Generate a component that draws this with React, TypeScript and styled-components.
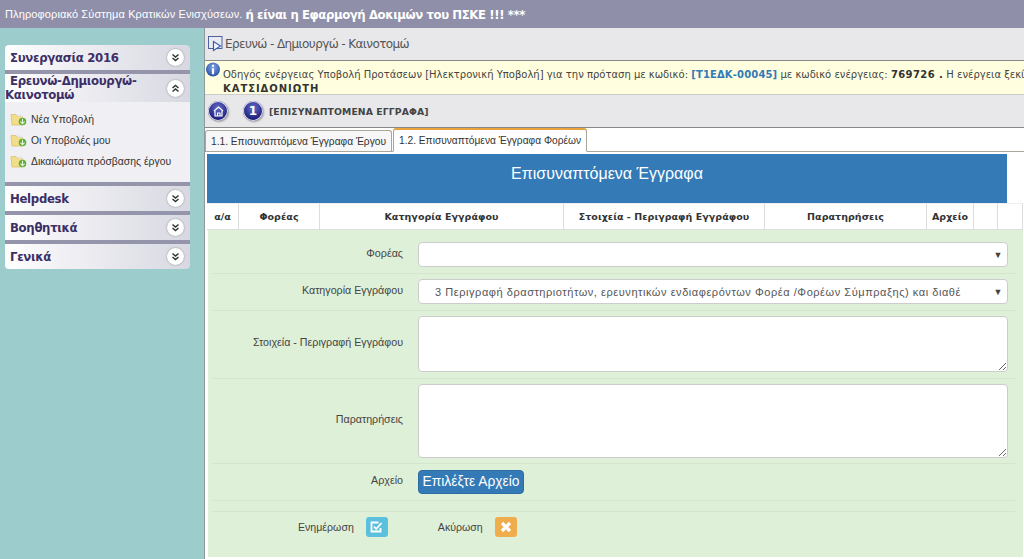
import React from "react";
import styled, { createGlobalStyle } from "styled-components";

const Global = createGlobalStyle`
  html, body { margin: 0; padding: 0; height: 559px; overflow: hidden; background: #9ccccc; }
  * { box-sizing: border-box; }
  #root { height: 559px; }
`;
const Page = styled.div`width:1024px;height:559px;display:flex;flex-direction:column;overflow:hidden;font-family:"DejaVu Sans",sans-serif;`;
const Header = styled.div`height:28px;background:#8f8fa9;color:#fff;display:flex;align-items:center;padding-left:5px;gap:3px;white-space:nowrap;`;
const HeaderSmall = styled.span`font:11px "Liberation Sans",sans-serif;letter-spacing:.12px;`;
const HeaderBold = styled.span`font:bold 13px "DejaVu Sans Condensed","DejaVu Sans",sans-serif;letter-spacing:-.4px;`;
const Columns = styled.div`flex:1;display:flex;min-height:0;`;
const Sidebar = styled.aside`width:204px;background:#9ccccc;padding:17px 14px 0 5px;display:flex;flex-direction:column;`;
const PanelHead = styled.div<{ $open?: boolean; $round?: "top" | "bottom" }>`
  display:flex;align-items:center;justify-content:space-between;
  height:${p => p.$open ? 28 : 25}px;padding:0 6px 0 5px;
  background:linear-gradient(90deg,#fff 0%,#f1f1f5 30%,#d8d8e2 100%);
  color:#3c2f66;font:bold 13px/14px "DejaVu Sans Condensed","DejaVu Sans",sans-serif;
  border-radius:${p => p.$round === "top" ? "4px 4px 0 0" : p.$round === "bottom" ? "0 0 4px 4px" : "0"};
`;
const HeadText = styled.span`display:block;letter-spacing:-.3px;`;
const Outdent = styled.span`display:inline-block;margin-left:-5px;`;
const Chevron = styled.span`width:17px;height:17px;border-radius:50%;background:#fff;box-shadow:0 0 2px #888;display:flex;align-items:center;justify-content:center;flex:none;`;
const Divider = styled.div`height:4px;background:#9494ab;`;
const PanelBody = styled.ul`height:80px;margin:0;padding:8px 0 0 5px;list-style:none;background:#f0f0f4;display:flex;flex-direction:column;gap:3px;`;
const MenuItem = styled.li`height:18px;display:flex;align-items:center;gap:4px;font:10.4px "Liberation Sans",sans-serif;color:#333;`;
const Main = styled.main`flex:1;min-width:0;border-left:1px solid #8d9a9a;background:#fff;display:flex;flex-direction:column;`;
const TitleBar = styled.div`height:33px;background:#e8e8ea;border-bottom:1px solid #888;display:flex;align-items:center;padding:0 0 0 2px;font:12px "DejaVu Sans",sans-serif;color:#555;white-space:nowrap;letter-spacing:-.6px;`;
const Notice = styled.div`height:34px;background:#ffffdf;border-bottom:1px solid #ccc;position:relative;padding:7px 0 0 18px;font:10px/14px "DejaVu Sans",sans-serif;color:#444;white-space:nowrap;overflow:hidden;`;
const InfoIcon = styled.span`position:absolute;left:0;top:1px;width:16px;height:16px;`;
const NoticeBold = styled.b`color:#333;letter-spacing:.4px;`;
const Owner = styled(NoticeBold)`letter-spacing:.95px;`;
const Code = styled.b`color:#337ab7;letter-spacing:.15px;`;
const Toolbar = styled.div`height:33px;background:#e8e8ea;border-bottom:1px solid #888;display:flex;align-items:center;padding-left:3px;`;
const RoundBtn = styled.span<{ $step?: boolean }>`width:20px;height:20px;border-radius:50%;background:radial-gradient(circle at 50% 35%,#6670cc,#1c1c78 70%);box-shadow:1px 1px 2px #999,inset 0 0 0 1px #dde;color:#fff;display:flex;align-items:center;justify-content:center;font:bold 12px "DejaVu Sans",sans-serif;margin-right:${p => p.$step ? 6 : 15}px;`;
const ToolText = styled.b`font:bold 9.3px "DejaVu Sans",sans-serif;color:#444;letter-spacing:.1px;`;
const Tabs = styled.div`height:24px;border-bottom:1px solid #aaa79a;display:flex;align-items:flex-end;`;
const Tab = styled.div<{ $active?: boolean }>`
  height:${p => p.$active ? 24 : 21}px;
  padding:0 5px;display:flex;align-items:center;
  border:1px solid #aaa79a;border-bottom:${p => p.$active ? "1px solid #fff" : "0"};
  border-top:${p => p.$active ? "2px solid #e8a33c" : "1px solid #aaa79a"};
  border-radius:3px 3px 0 0;margin-right:1px;
  font:10.2px "Liberation Sans",sans-serif;color:#333;white-space:nowrap;background:${p => p.$active ? "#fff" : "#f7f7f7"};
  margin-bottom:${p => p.$active ? "-1px" : "0"};
`;
const Content = styled.div`padding:2px 0 2px 2px;flex:1;display:flex;flex-direction:column;min-height:0;background:#fff;`;
const Banner = styled.div`height:49px;width:800px;background:#337ab7;color:#fff;display:flex;align-items:center;justify-content:center;font:16px "Liberation Sans",sans-serif;padding-bottom:10px;`;
const TableHead = styled.div`height:27px;display:grid;grid-template-columns:32px 81px 244px 201px 162px 47px 24px 25px;width:816px;background:#fff;border-bottom:1px solid #ddd;`;
const Th = styled.div`border-right:1px solid #ddd;border-top:1px solid #eee;display:flex;align-items:center;justify-content:center;font:bold 9.5px "DejaVu Sans",sans-serif;color:#333;white-space:nowrap;letter-spacing:.05px;`;
const Form = styled.div`flex:1;margin-left:1px;width:815px;background:#dff0d8;padding:6px 8px 0 0;display:flex;flex-direction:column;`;
const Row = styled.div<{ $h: number }>`
  height:${p => p.$h}px;box-shadow:0 1px 0 #d3e5cb;margin-left:5px;
  display:grid;grid-template-columns:190px 590px;column-gap:15px;align-items:center;
`;
const Label = styled.label`text-align:right;font:10.7px "Liberation Sans",sans-serif;color:#444;padding-bottom:4px;`;
const Select = styled.div`height:25px;background:#fff;border:1px solid #ccc;border-radius:4px;display:flex;align-items:center;justify-content:space-between;padding:0 4px 0 16px;font:11px "Liberation Sans",sans-serif;color:#555;letter-spacing:.55px;white-space:nowrap;overflow:hidden;`;
const Arrow = styled.span`font-size:9px;color:#444;flex:none;`;
const Area = styled.textarea<{ $h: number }>`display:block;width:590px;height:${p => p.$h}px;border:1px solid #ccc;border-radius:4px;background:#fff;resize:vertical;margin:0;`;
const FileBtn = styled.button`height:24px;width:106px;padding:0;background:#337ab7;color:#fff;border:1px solid #2e6da4;border-radius:4px;font:13.8px "Liberation Sans",sans-serif;display:block;`;
const Spacer = styled.div`height:11px;box-shadow:0 1px 0 #d3e5cb;margin-left:5px;`;
const Actions = styled.div`display:flex;align-items:center;height:32px;margin-left:90px;font:10.6px "Liberation Sans",sans-serif;color:#444;`;
const ActionLabel = styled.span<{ $gap: number }>`margin-right:${p => p.$gap}px;`;
const ActionBtn = styled.span<{ $c: string; $mr?: number }>`width:22px;height:20px;border-radius:3px;background:${p => p.$c};display:flex;align-items:center;justify-content:center;margin-right:${p => p.$mr || 0}px;`;

const Chev = ({ up }: { up?: boolean }) => (
  <Chevron>
    <svg width="9" height="9" viewBox="0 0 9 9" fill="none" stroke="#333" strokeWidth="1.5">
      {up ? <path d="M1.5 4 4.5 1.5 7.5 4M1.5 7.5 4.5 5 7.5 7.5" /> : <path d="M1.5 1.5 4.5 4 7.5 1.5M1.5 5 4.5 7.5 7.5 5" />}
    </svg>
  </Chevron>
);
const Folder = () => (
  <svg width="17" height="15" viewBox="0 0 17 15">
    <path d="M1 2.5h5l1.2 1.6h4.8l1 2.4v6.5H2z" fill="#f2dd8a" stroke="#d8bc5c" strokeWidth=".7" />
    <path d="M7 2.5h5l1 2H8z" fill="#dfe8f2" />
    <circle cx="12.5" cy="9.5" r="3.8" fill="#5fae38" />
    <path d="M12.5 6.8v4.6M10.4 9.6l2.1 2.2 2.1-2.2" stroke="#e9f7df" strokeWidth="1.1" fill="none" />
  </svg>
);
const ArrowDoc = () => (
  <svg width="18" height="18" viewBox="0 0 18 18">
    <rect x="1.5" y="1.5" width="13.5" height="12" fill="#e8eaf4" stroke="#50609e" />
    <path d="M6.5 6.5v9l7-4.5z" fill="#f3f6ff" stroke="#3d5cae" strokeWidth="1.2" />
  </svg>
);

export default function App() {
  return (
    <Page>
      <Global />
      <Header>
        <HeaderSmall>Πληροφοριακό Σύστημα Κρατικών Ενισχύσεων.</HeaderSmall>
        <HeaderBold>ή είναι η Εφαρμογή Δοκιμών του ΠΣΚΕ !!! ***</HeaderBold>
      </Header>
      <Columns>
        <Sidebar>
          <PanelHead $round="top"><HeadText>Συνεργασία 2016</HeadText><Chev /></PanelHead>
          <Divider />
          <PanelHead $open>
            <HeadText>Ερευνώ-Δημιουργώ-<br /><Outdent>Καινοτομώ</Outdent></HeadText><Chev up />
          </PanelHead>
          <PanelBody>
            <MenuItem><Folder />Νέα Υποβολή</MenuItem>
            <MenuItem><Folder />Οι Υποβολές μου</MenuItem>
            <MenuItem><Folder />Δικαιώματα πρόσβασης έργου</MenuItem>
          </PanelBody>
          <Divider />
          <PanelHead><HeadText>Helpdesk</HeadText><Chev /></PanelHead>
          <Divider />
          <PanelHead><HeadText>Βοηθητικά</HeadText><Chev /></PanelHead>
          <Divider />
          <PanelHead $round="bottom"><HeadText>Γενικά</HeadText><Chev /></PanelHead>
        </Sidebar>
        <Main>
          <TitleBar><ArrowDoc />Ερευνώ - Δημιουργώ - Καινοτομώ</TitleBar>
          <Notice>
            <InfoIcon>
              <svg width="16" height="16" viewBox="0 0 16 16">
                <defs>
                  <radialGradient id="info" cx="50%" cy="35%" r="65%">
                    <stop offset="0" stopColor="#7fa4e6" />
                    <stop offset="1" stopColor="#274fa8" />
                  </radialGradient>
                </defs>
                <circle cx="8" cy="7.5" r="7" fill="url(#info)" />
                <path d="M8 2.8v2M8 6.2v6" stroke="#fff" strokeWidth="2.2" />
              </svg>
            </InfoIcon>
            Οδηγός ενέργειας Υποβολή Προτάσεων [Ηλεκτρονική Υποβολή] για την πρόταση με κωδικό: <Code>[Τ1ΕΔΚ-00045]</Code> με κωδικό ενέργειας: <NoticeBold>769726 .</NoticeBold> Η ενέργεια ξεκίνησε
            <br /><Owner>ΚΑΤΣΙΔΟΝΙΩΤΗ</Owner>
          </Notice>
          <Toolbar>
            <RoundBtn>
              <svg width="11" height="11" viewBox="0 0 11 11" fill="none" stroke="#fff" strokeWidth="1.2">
                <path d="M1 5 5.5 1 10 5M2 5v5h7V5M4.5 10V7h2.5v3" />
              </svg>
            </RoundBtn>
            <RoundBtn $step>1</RoundBtn>
            <ToolText>[ΕΠΙΣΥΝΑΠΤΟΜΕΝΑ ΕΓΓΡΑΦΑ]</ToolText>
          </Toolbar>
          <Tabs>
            <Tab>1.1. Επισυναπτόμενα Έγγραφα Έργου</Tab>
            <Tab $active>1.2. Επισυναπτόμενα Έγγραφα Φορέων</Tab>
          </Tabs>
          <Content>
            <Banner>Επισυναπτόμενα Έγγραφα</Banner>
            <TableHead>
              <Th>α/α</Th><Th>Φορέας</Th><Th>Κατηγορία Εγγράφου</Th><Th>Στοιχεία - Περιγραφή Εγγράφου</Th><Th>Παρατηρήσεις</Th><Th>Αρχείο</Th><Th /><Th />
            </TableHead>
            <Form>
              <Row $h={37}><Label>Φορέας</Label><Select><span /><Arrow>▼</Arrow></Select></Row>
              <Row $h={37}>
                <Label>Κατηγορία Εγγράφου</Label>
                <Select><span>3 Περιγραφή δραστηριοτήτων, ερευνητικών ενδιαφερόντων Φορέα /Φορέων Σύμπραξης) και διαθέ</span><Arrow>▼</Arrow></Select>
              </Row>
              <Row $h={68}><Label>Στοιχεία - Περιγραφή Εγγράφου</Label><Area $h={56} /></Row>
              <Row $h={85}><Label>Παρατηρήσεις</Label><Area $h={74} /></Row>
              <Row $h={37}><Label>Αρχείο</Label><div><FileBtn>Επιλέξτε Αρχείο</FileBtn></div></Row>
              <Spacer />
              <Actions>
                <ActionLabel $gap={12}>Ενημέρωση</ActionLabel>
                <ActionBtn $c="#5bc0de" $mr={50}>
                  <svg width="13" height="12" viewBox="0 0 13 12" fill="none" stroke="#fff" strokeWidth="1.8">
                    <path d="M10.5 7v3.5h-9v-9h7M4 5.5 6.2 8 11.5 2" />
                  </svg>
                </ActionBtn>
                <ActionLabel $gap={12}>Ακύρωση</ActionLabel>
                <ActionBtn $c="#f0ad4e">
                  <svg width="12" height="12" viewBox="0 0 12 12" stroke="#fff" strokeWidth="3.2">
                    <path d="M2 2l8 8M10 2l-8 8" />
                  </svg>
                </ActionBtn>
              </Actions>
            </Form>
          </Content>
        </Main>
      </Columns>
    </Page>
  );
}
